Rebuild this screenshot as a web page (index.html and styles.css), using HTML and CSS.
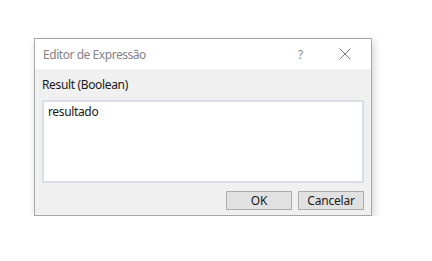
FILE: index.html
```html
<!DOCTYPE html>
<html lang="pt">
<head>
    <meta charset="UTF-8">
    <title>Editor de Expressão</title>
    <link rel="stylesheet" href="styles.css">
</head>
<body>
    <div class="dialog">
        <div class="titlebar">
            <span class="title">Editor de Expressão</span>
            <span class="help">?</span>
            <svg class="close" width="12" height="12" viewBox="0 0 12 12">
                <path d="M0.5 0.5 L11.5 11.5 M11.5 0.5 L0.5 11.5" stroke="#7a7a7a" stroke-width="1" fill="none"/>
            </svg>
        </div>
        <div class="content">
            <div class="label">Result (Boolean)</div>
            <div class="editor">resultado</div>
            <div class="buttons">
                <button class="btn">OK</button>
                <button class="btn">Cancelar</button>
            </div>
        </div>
    </div>
</body>
</html>
```

FILE: styles.css
```css
* {
    margin: 0;
    padding: 0;
    box-sizing: border-box;
}

body {
    background: #ffffff;
    font-family: "Noto Sans", "Open Sans", sans-serif;
    font-size: 12px;
    color: #1a1a1a;
}

.dialog {
    margin: 38px 0 0 34px;
    width: 338px;
    height: 178px;
    border: 1px solid #a7a7a7;
    background: #f0f0f0;
    box-shadow: 2px 3px 8px rgba(0, 0, 0, 0.18);
    display: flex;
    flex-direction: column;
}

.titlebar {
    height: 30px;
    background: #ffffff;
    display: flex;
    align-items: center;
    padding-left: 8px;
}

.title {
    flex: 1;
    color: #877f8b;
    letter-spacing: -0.45px;
}

.help {
    color: #8a8a8a;
    width: 14px;
    margin-right: 27px;
}

.close {
    margin-right: 20px;
}

.content {
    flex: 1;
    padding: 8px 7px 0 7px;
}

.label {
    height: 15px;
    line-height: 15px;
    letter-spacing: -0.35px;
    margin-bottom: 8px;
}

.editor {
    height: 83px;
    background: #ffffff;
    border: 2px solid #d9dee6;
    padding: 2px 4px;
    line-height: 16px;
    letter-spacing: -0.35px;
}

.buttons {
    display: flex;
    justify-content: flex-end;
    gap: 6px;
    margin-top: 8px;
}

.btn {
    width: 66px;
    height: 19px;
    background: #e1e1e1;
    border: 1px solid #adadad;
    font-family: inherit;
    font-size: 12px;
    color: #1a1a1a;
    line-height: 16px;
    letter-spacing: -0.2px;
}
```
